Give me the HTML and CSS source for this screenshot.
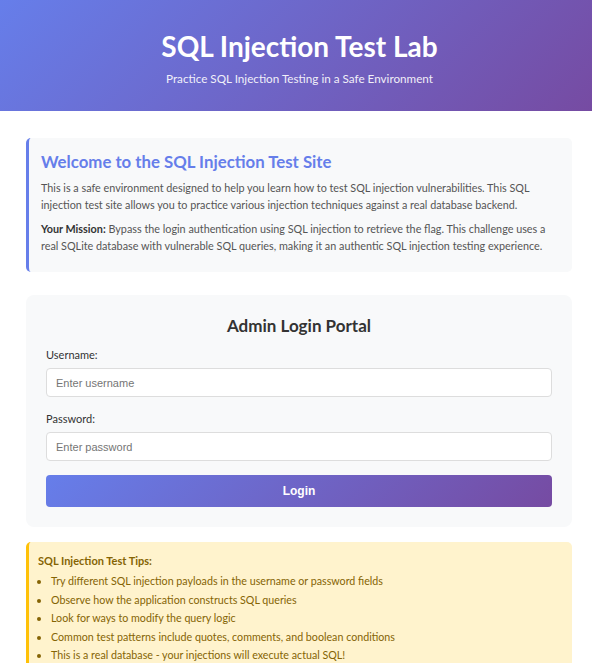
FILE: index.html
```html
<!DOCTYPE html>
<html lang="en">
<head>
<meta charset="utf-8">
<title>SQL Injection Test Lab</title>
<link rel="stylesheet" href="styles.css">
</head>
<body>
<header class="hero">
  <h1 class="hero-title">SQL Injection Test Lab</h1>
  <p class="hero-sub">Practice SQL Injection Testing in a Safe Environment</p>
</header>
<main class="container">
  <section class="welcome">
    <h2 class="welcome-title">Welcome to the SQL Injection Test Site</h2>
    <p class="welcome-text">This is a safe environment designed to help you learn how to test SQL injection vulnerabilities. This SQL injection test site allows you to practice various injection techniques against a real database backend.</p>
    <p class="welcome-text"><strong>Your Mission:</strong> Bypass the login authentication using SQL injection to retrieve the flag. This challenge uses a real SQLite database with vulnerable SQL queries, making it an authentic SQL injection testing experience.</p>
  </section>
  <section class="login">
    <h2 class="login-title">Admin Login Portal</h2>
    <form class="login-form">
      <label class="field-label" for="username">Username:</label>
      <input class="field-input" id="username" type="text" placeholder="Enter username">
      <label class="field-label" for="password">Password:</label>
      <input class="field-input" id="password" type="password" placeholder="Enter password">
      <button class="login-btn" type="button">Login</button>
    </form>
  </section>
  <section class="tips">
    <h3 class="tips-title">SQL Injection Test Tips:</h3>
    <ul class="tips-list">
      <li>Try different SQL injection payloads in the username or password fields</li>
      <li>Observe how the application constructs SQL queries</li>
      <li>Look for ways to modify the query logic</li>
      <li>Common test patterns include quotes, comments, and boolean conditions</li>
      <li>This is a real database - your injections will execute actual SQL!</li>
    </ul>
  </section>
</main>
</body>
</html>
```
FILE: styles.css
```css
* { box-sizing: border-box; }
html, body { margin: 0; padding: 0; }
body {
  font-family: Lato, "Noto Sans", sans-serif;
  color: #333;
  background: #fff;
  overflow: hidden;
}
.hero {
  height: 111px;
  background: linear-gradient(135deg, #667eea 0%, #764ba2 100%);
  color: #fff;
  text-align: center;
  padding: 28px 0 0 7px;
}
.hero-title {
  margin: 0;
  font-size: 28px;
  font-weight: 700;
  line-height: 36px;
}
.hero-sub {
  margin: 6px 0 0;
  font-size: 11.7px;
  line-height: 16px;
  opacity: 0.9;
}
.container {
  margin: 27px 20px 0 26px;
  display: flex;
  flex-direction: column;
}
.welcome {
  background: #f8f9fa;
  border-left: 3px solid #667eea;
  border-radius: 5px;
  padding: 13px 20px 11px 12px;
}
.welcome-title {
  margin: 0 0 6px;
  color: #667eea;
  font-size: 16.8px;
  line-height: 22px;
  font-weight: 700;
}
.welcome-text {
  margin: 0 0 7px;
  font-size: 10.8px;
  line-height: 17px;
  color: #555;
}
.welcome-text strong { color: #333; }
.login {
  margin-top: 23px;
  background: #f8f9fa;
  border-radius: 8px;
  padding: 20px 20px 20px;
  height: 232px;
}
.login-title {
  margin: 0 0 10px;
  text-align: center;
  font-size: 17px;
  line-height: 22px;
  font-weight: 700;
  color: #333;
}
.login-form {
  display: flex;
  flex-direction: column;
}
.field-label {
  font-size: 11px;
  line-height: 16px;
  color: #333;
  margin-bottom: 5px;
}
.field-input {
  height: 29px;
  border: 1px solid #ddd;
  border-radius: 4px;
  background: #fff;
  padding: 0 9px;
  font-family: "Liberation Sans", Arial, sans-serif;
  font-size: 11px;
  color: #333;
  margin-bottom: 14px;
}
.field-input::placeholder { color: #757575; }
.login-btn {
  height: 32px;
  border: 0;
  border-radius: 4px;
  background: linear-gradient(135deg, #667eea 0%, #764ba2 100%);
  color: #fff;
  font-family: "Liberation Sans", Arial, sans-serif;
  font-size: 12px;
  font-weight: 700;
}
.tips {
  margin-top: 15px;
  background: #fff3cd;
  border-left: 3px solid #ffc107;
  border-radius: 5px;
  padding: 11px 15px 20px 9px;
  color: #856404;
}
.tips-title {
  margin: 0 0 3px;
  font-size: 11px;
  line-height: 16px;
  font-weight: 700;
}
.tips-list {
  margin: 0;
  padding-left: 13px;
  font-size: 10.7px;
  line-height: 18.6px;
}
```
